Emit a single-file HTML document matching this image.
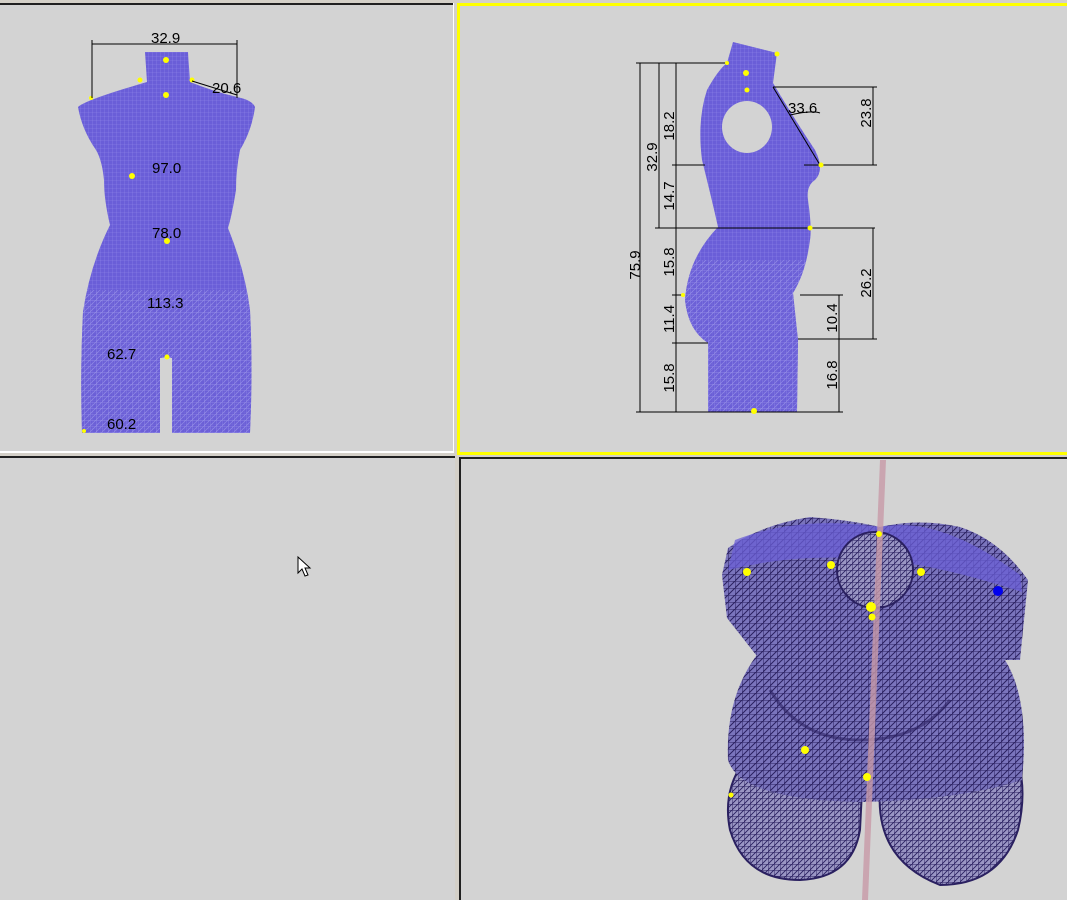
<!DOCTYPE html>
<html><head><meta charset="utf-8"><style>
html,body{margin:0;padding:0;width:1067px;height:900px;overflow:hidden;background:#d4d0c8;font-family:"Liberation Sans",sans-serif}
svg{position:absolute;left:0;top:0}
</style></head><body>
<svg width="1067" height="900" viewBox="0 0 1067 900" font-family="Liberation Sans, sans-serif">
<defs>
<pattern id="m1" width="4" height="4" patternUnits="userSpaceOnUse">
<rect width="4" height="4" fill="#6a5ed8"/><path d="M0 0H4M0 0V4" stroke="#8f88ea" stroke-width="0.6"/></pattern>
<pattern id="m2" width="6" height="6" patternUnits="userSpaceOnUse">
<rect width="6" height="6" fill="#6c60d6"/><path d="M0 0H6M0 0V6M0 6L6 0" stroke="#aaa5ee" stroke-width="0.7"/></pattern>
<pattern id="m3" width="7" height="7" patternUnits="userSpaceOnUse">
<rect width="7" height="7" fill="#7a74bc"/><path d="M0 0H7M0 0V7M0 7L7 0" stroke="#2a2060" stroke-width="1"/></pattern>
<pattern id="m4" width="6" height="6" patternUnits="userSpaceOnUse">
<rect width="6" height="6" fill="#9a96c4"/><path d="M0 0H6M0 0V6M0 6L6 0" stroke="#2a2060" stroke-width="0.9"/></pattern>
<clipPath id="cf"><path id="pf" d="M145 52 L188 52 L190 82 Q215 92 237 97 Q252 100 255 107 Q252 130 240 150 Q236 170 236 190 Q232 215 228 228 Q245 270 250 310 Q253 370 250 433 L172 433 L172 358 L167 357 L160 358 L160 433 L82 433 Q80 370 83 312 Q90 265 110 225 Q104 200 104 180 Q102 160 96 150 Q82 130 78 107 Q85 100 147 82 Z"/></clipPath>
<clipPath id="cs"><path id="ps" d="M733 42 L777 53 L773 83 Q795 120 815 150 Q825 170 815 180 Q806 186 808 200 Q812 228 810 240 Q806 272 793 293 L798 340 L797 412 L708 412 L708 343 Q688 330 685 300 Q688 258 718 227 Q712 200 702 160 Q697 120 707 90 Q718 70 727 63 Z"/></clipPath>
</defs>
<!-- panels -->
<rect x="0" y="0" width="1067" height="3" fill="#d4d0c8"/>
<rect x="0" y="3" width="454" height="2" fill="#202020"/>
<rect x="0" y="5" width="453" height="447" fill="#d3d3d3"/>
<rect x="0" y="451" width="454" height="2" fill="#ffffff"/>
<rect x="453" y="3" width="1" height="450" fill="#ffffff"/>
<rect x="457" y="3" width="610" height="452" fill="#ffff00"/>
<rect x="460" y="6" width="607" height="446" fill="#d3d3d3"/>
<rect x="0" y="456" width="455" height="444" fill="#202020"/>
<rect x="0" y="458" width="455" height="442" fill="#d3d3d3"/>
<rect x="459" y="457" width="608" height="443" fill="#202020"/>
<rect x="461" y="459" width="606" height="441" fill="#d3d3d3"/>

<!-- front figure -->
<use href="#pf" fill="url(#m1)"/>
<rect x="70" y="290" width="200" height="150" fill="url(#m2)" opacity="0.6" clip-path="url(#cf)"/>
<g fill="#ffff00"><circle cx="166" cy="60" r="3"/><circle cx="140" cy="80" r="2.5"/><circle cx="192" cy="80" r="2.5"/><circle cx="166" cy="95" r="3"/><circle cx="132" cy="176" r="3"/><circle cx="167" cy="241" r="3"/><circle cx="167" cy="357" r="2.5"/><circle cx="91" cy="98" r="2"/><circle cx="84" cy="431" r="2"/></g>
<g stroke="#000" stroke-width="1" fill="none"><path d="M92 44H237M92 40V98M237 40V98M192 81L237 95"/></g>
<g font-size="15" fill="#000"><text x="151" y="43">32.9</text><text x="212" y="93">20.6</text><text x="152" y="173">97.0</text><text x="152" y="238">78.0</text><text x="147" y="308">113.3</text><text x="107" y="359">62.7</text><text x="107" y="429">60.2</text></g>

<!-- side figure -->
<use href="#ps" fill="url(#m1)"/>
<rect x="670" y="260" width="150" height="160" fill="url(#m2)" opacity="0.6" clip-path="url(#cs)"/>
<ellipse cx="747" cy="127" rx="25" ry="26" fill="#d3d3d3"/>
<g stroke="#000" stroke-width="1" fill="none">
<path d="M640 63V412M659 63V228M676 63V412M873 87V165M873 228V339M839 295V412"/>
<path d="M636 63H727M655 228H875M672 165H705M804 165H877M672 295H685M800 295H843M672 343H708M798 339H877M636 412H843M773 87H877M656 63H680M773 87L820 165M790 115Q812 110 820 113"/>
</g>
<g fill="#ffff00"><circle cx="777" cy="54" r="2.5"/><circle cx="746" cy="73" r="3"/><circle cx="747" cy="90" r="2.5"/><circle cx="727" cy="63" r="2"/><circle cx="821" cy="165" r="2.5"/><circle cx="810" cy="228" r="2.5"/><circle cx="683" cy="295" r="2"/><circle cx="754" cy="411" r="3"/></g>
<g font-size="15" fill="#000">
<text x="788" y="113">33.6</text>
<text transform="translate(640,265) rotate(-90)" text-anchor="middle">75.9</text>
<text transform="translate(657,157) rotate(-90)" text-anchor="middle">32.9</text>
<text transform="translate(674,126) rotate(-90)" text-anchor="middle">18.2</text>
<text transform="translate(674,196) rotate(-90)" text-anchor="middle">14.7</text>
<text transform="translate(674,262) rotate(-90)" text-anchor="middle">15.8</text>
<text transform="translate(674,319) rotate(-90)" text-anchor="middle">11.4</text>
<text transform="translate(674,378) rotate(-90)" text-anchor="middle">15.8</text>
<text transform="translate(871,113) rotate(-90)" text-anchor="middle">23.8</text>
<text transform="translate(871,283) rotate(-90)" text-anchor="middle">26.2</text>
<text transform="translate(837,318) rotate(-90)" text-anchor="middle">10.4</text>
<text transform="translate(837,375) rotate(-90)" text-anchor="middle">16.8</text>
</g>

<!-- bottom-right figure -->
<path d="M745 760 Q722 790 730 830 Q745 880 800 880 Q852 878 860 830 L862 790 Z" fill="url(#m4)" stroke="#2a2060" stroke-width="2"/>
<path d="M880 790 Q875 860 940 885 Q1000 885 1018 830 Q1030 780 1010 740 Z" fill="url(#m4)" stroke="#2a2060" stroke-width="2"/>
<path d="M765 645 Q725 690 728 760 Q740 800 860 802 Q960 800 1022 780 Q1030 700 1005 660 Z" fill="url(#m3)"/>
<path d="M728 548 Q760 525 810 517 Q850 520 880 527 Q920 518 960 527 Q1000 540 1028 580 L1020 660 L1000 660 Q998 720 960 750 Q900 770 870 760 Q840 770 790 750 Q762 720 760 660 L727 618 L722 575 Z" fill="url(#m3)"/>
<path d="M735 540 Q800 515 880 527 Q940 515 1020 575 L1022 592 Q940 565 880 560 Q800 552 728 570Z" fill="#6b5fd6" opacity="0.75"/>
<path d="M770 690 Q800 740 860 740 Q920 740 950 700" stroke="#2a2060" stroke-width="3" fill="none" opacity="0.6"/>
<circle cx="875" cy="570" r="38" fill="url(#m4)" stroke="#2a2060" stroke-width="2"/>
<path d="M880 460 L886 460 L868 900 L862 900Z" fill="#c89aa8" opacity="0.8"/>
<g fill="#ffff00"><circle cx="747" cy="572" r="4"/><circle cx="831" cy="565" r="4"/><circle cx="921" cy="572" r="4"/><circle cx="879" cy="534" r="3"/><circle cx="871" cy="607" r="5"/><circle cx="872" cy="617" r="3.5"/><circle cx="805" cy="750" r="4"/><circle cx="867" cy="777" r="4"/><circle cx="731" cy="795" r="2.5"/></g>
<circle cx="998" cy="591" r="5" fill="#0000ee"/>

<!-- cursor -->
<path d="M298 557 L298 573 L302 569 L305 576 L308 575 L305 568 L310 568 Z" fill="#fff" stroke="#000" stroke-width="1"/>
</svg>
</body></html>
